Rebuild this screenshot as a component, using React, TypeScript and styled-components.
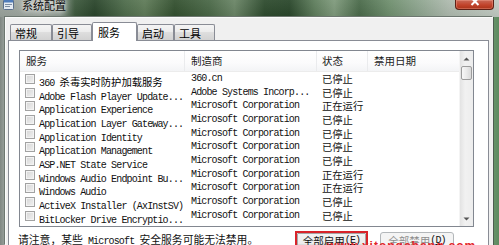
import React from "react";
import styled, { createGlobalStyle } from "styled-components";

const CJK = `"Noto Sans CJK SC", "Noto Sans", sans-serif`;
const MONO = `"Liberation Mono", "Noto Sans CJK SC", monospace`;

const GlobalStyle = createGlobalStyle`
  html, body { margin: 0; padding: 0; }
  body {
    width: 499px; height: 245px; overflow: hidden;
    background: #8e9690;
    font-family: ${CJK};
  }
`;

const Screen = styled.div`
  position: relative;
  width: 499px;
  height: 245px;
  overflow: hidden;
  display: flex;
  flex-direction: column;
  background: linear-gradient(90deg, #7f8782 0%, #9aa29d 1%, #808c84 50%, #6e9a70 98%, #5e8a60 100%);
`;

const TitleBar = styled.div`
  height: 17px;
  flex: none;
  display: flex;
  align-items: flex-start;
  background:
    linear-gradient(180deg, rgba(255,255,255,0.06), rgba(0,0,0,0.06)),
    linear-gradient(90deg, #9aa39c 0%, #a3aba4 8%, #8f9b91 12%, #3e5a3e 15%, #2a452b 19%, #4e6c4b 25%, #5f7b58 29%, #33502f 35%, #4a6847 42%, #6a8566 47%, #2e4b2e 53%, #2a472b 58%, #5e7d5c 63%, #7f9a7c 67%, #4a6a4a 72%, #6f8f6e 78%, #8ea58f 84%, #aebaae 90%, #c2cbc3 100%);
`;

const AppIcon = styled.svg`
  margin: -1px 0 0 3px;
  flex: none;
`;

const TitleText = styled.div`
  margin: -1px 0 0 8px;
  font-size: 11px;
  line-height: 12px;
  color: #0a0a0a;
  text-shadow: 0 0 4px rgba(255,255,255,0.95), 0 0 7px rgba(255,255,255,0.8);
`;

const CloseButton = styled.div`
  margin: 0 5px 0 auto;
  width: 39px;
  height: 10px;
  box-sizing: border-box;
  border: 1px solid #5e2016;
  border-top: none;
  border-radius: 0 0 4px 4px;
  background: linear-gradient(180deg, #c96a58 0%, #c2432b 55%, #a83218 100%);
  box-shadow: inset 0 0 0 1px rgba(255,180,160,0.35);
  display: flex;
  justify-content: center;
  align-items: flex-start;
`;

const WindowBody = styled.div`
  flex: 1;
  min-height: 0;
  margin: 0 6px 0 5px;
  background: #f0f0f0;
  border-top: 1px solid #fbfcfb;
  border-left: 1px solid #fbfcfb;
  box-shadow: -1px -1px 0 #6d7770, 1px 0 0 #4d5d50;
  padding-top: 4px;
  display: flex;
  flex-direction: column;
`;

const TabStrip = styled.div`
  height: 19px;
  flex: none;
  display: flex;
  align-items: flex-end;
  padding-left: 4px;
  position: relative;
  z-index: 2;
`;

const Tab = styled.div<{ $active?: boolean; $w: number }>`
  box-sizing: border-box;
  width: ${(p) => p.$w}px;
  height: ${(p) => (p.$active ? 19 : 16)}px;
  margin-bottom: ${(p) => (p.$active ? 0 : 1)}px;
  padding-left: ${(p) => (p.$active ? 5 : 4)}px;
  border: 1px solid #898c95;
  border-bottom: none;
  border-radius: 2px 2px 0 0;
  background: ${(p) =>
    p.$active
      ? "#ffffff"
      : "linear-gradient(180deg, #f4f4f4 0%, #ececec 45%, #dedede 50%, #d2d2d2 100%)"};
  display: flex;
  align-items: center;
  font-size: 11px;
  line-height: 12px;
  color: #000;
`;

const TabPanel = styled.div`
  flex: 1;
  min-height: 0;
  position: relative;
  z-index: 1;
  margin: -1px 4px 0 2px;
  background: #ffffff;
  border: 1px solid #898c95;
  border-bottom: none;
  padding: 9px 14px 0 10px;
  display: flex;
  flex-direction: column;
`;

const ListBox = styled.div`
  height: 177px;
  flex: none;
  box-sizing: border-box;
  border: 1px solid #828790;
  display: flex;
  background: #fff;
`;

const ListContent = styled.div`
  flex: 1;
  min-width: 0;
  display: flex;
  flex-direction: column;
`;

const COLS = "165px 132px 51px 1fr";

const HeaderRow = styled.div`
  display: grid;
  grid-template-columns: ${COLS};
  height: 21px;
  flex: none;
  background: linear-gradient(180deg, #ffffff 0%, #fbfbfc 60%, #f3f4f6 100%);
  border-bottom: 1px solid #ececec;
  box-sizing: border-box;
`;

const HeaderCell = styled.div<{ $pad: number }>`
  display: flex;
  align-items: center;
  padding-left: ${(p) => p.$pad}px;
  border-right: 1px solid #eaebed;
  font-size: 10.5px;
  line-height: 12px;
  color: #1a1a1a;
  &:last-child { border-right: none; }
`;

const Row = styled.div`
  display: grid;
  grid-template-columns: ${COLS};
  height: 13.7px;
  align-items: center;
`;

const NameCell = styled.div`
  display: flex;
  align-items: center;
  gap: 4px;
  padding-left: 5px;
  white-space: nowrap;
  overflow: hidden;
`;

const MonoText = styled.span`
  font-family: ${MONO};
  font-size: 10px;
  letter-spacing: -0.85px;
  line-height: 12px;
  color: #111;
  white-space: pre;
`;

const CjkText = styled.span<{ $size?: number }>`
  font-family: ${CJK};
  font-size: ${(p) => p.$size ?? 10.3}px;
  letter-spacing: 0;
  line-height: 12px;
`;

const VendorCell = styled.div`
  padding-left: 6px;
  white-space: nowrap;
  overflow: hidden;
  display: flex;
  align-items: center;
`;

const StatusCell = styled.div`
  padding-left: 5px;
  font-size: 10.3px;
  line-height: 12px;
  color: #111;
  white-space: nowrap;
`;

const CheckBox = styled.span`
  width: 10px;
  height: 10px;
  box-sizing: border-box;
  flex: none;
  border: 1px solid #a2a2a2;
  background: linear-gradient(135deg, #d6d6d6 0%, #e6e6e6 60%, #f1f1f1 100%);
  box-shadow: inset 0 0 0 1px #f3f3f3;
`;

const ScrollBar = styled.div`
  width: 14px;
  flex: none;
  display: flex;
  flex-direction: column;
  background: linear-gradient(90deg, #e3e3e3 0%, #f1f1f1 40%, #ededed 100%);
  border-left: 1px solid #f4f4f4;
  box-sizing: border-box;
`;

const ArrowButton = styled.div`
  height: 15px;
  flex: none;
  display: flex;
  align-items: center;
  justify-content: center;
`;

const Thumb = styled.div`
  height: 14px;
  flex: none;
  margin: 0 1px;
  box-sizing: border-box;
  border: 1px solid #9c9c9c;
  border-radius: 2px;
  background: linear-gradient(90deg, #f7f7f7 0%, #eaeaea 50%, #d9d9d9 100%);
`;

const Track = styled.div`
  flex: 1;
`;

const Footer = styled.div`
  display: flex;
  align-items: flex-start;
  margin-top: 4px;
`;

const Note = styled.div`
  flex: 1;
  margin-left: -1px;
  padding-top: 2px;
  font-size: 10.8px;
  line-height: 12px;
  color: #111;
  white-space: nowrap;
`;

const ButtonGroup = styled.div`
  display: flex;
  align-items: flex-start;
  gap: 12px;
  margin-right: 20px;
`;

const Highlight = styled.div`
  border: 2px solid #d8242a;
  width: 73px;
  height: 24px;
  box-sizing: border-box;
  display: flex;
`;

const PushButton = styled.div<{ $disabled?: boolean }>`
  box-sizing: border-box;
  flex: ${(p) => (p.$disabled ? "none" : "1")};
  width: ${(p) => (p.$disabled ? "74px" : "auto")};
  height: 22px;
  margin-top: ${(p) => (p.$disabled ? 1 : 0)}px;
  border: 1px solid ${(p) => (p.$disabled ? "#b3b7ba" : "#a6a6a6")};
  border-radius: ${(p) => (p.$disabled ? 3 : 1)}px;
  background: ${(p) =>
    p.$disabled ? "#f4f4f4" : "linear-gradient(180deg, #f3f3f3 0%, #ebebeb 50%, #dddddd 51%, #d4d4d4 100%)"};
  color: ${(p) => (p.$disabled ? "#8d8d8d" : "#111")};
  display: flex;
  justify-content: center;
  align-items: flex-start;
  padding-top: ${(p) => (p.$disabled ? 2 : 1)}px;
  font-size: 10.5px;
  line-height: 12px;
  white-space: nowrap;
`;

const Watermark = styled.div`
  position: absolute;
  left: 327px;
  top: 240px;
  font-family: "Liberation Sans", "Noto Sans CJK SC", sans-serif;
  font-weight: bold;
  font-size: 12px;
  line-height: 12px;
  color: #e3262b;
  letter-spacing: 1px;
  z-index: 5;
  white-space: nowrap;
`;

type Service = { name: React.ReactNode; vendor: string; status: string };

const MS = "Microsoft Corporation";

const services: Service[] = [
  {
    name: (
      <>
        <MonoText>360 </MonoText>
        <CjkText>杀毒实时防护加载服务</CjkText>
      </>
    ),
    vendor: "360.cn",
    status: "已停止",
  },
  { name: <MonoText>Adobe Flash Player Update...</MonoText>, vendor: "Adobe Systems Incorp...", status: "已停止" },
  { name: <MonoText>Application Experience</MonoText>, vendor: MS, status: "正在运行" },
  { name: <MonoText>Application Layer Gateway...</MonoText>, vendor: MS, status: "已停止" },
  { name: <MonoText>Application Identity</MonoText>, vendor: MS, status: "已停止" },
  { name: <MonoText>Application Management</MonoText>, vendor: MS, status: "已停止" },
  { name: <MonoText>ASP.NET State Service</MonoText>, vendor: MS, status: "已停止" },
  { name: <MonoText>Windows Audio Endpoint Bu...</MonoText>, vendor: MS, status: "正在运行" },
  { name: <MonoText>Windows Audio</MonoText>, vendor: MS, status: "正在运行" },
  { name: <MonoText>ActiveX Installer (AxInstSV)</MonoText>, vendor: MS, status: "已停止" },
  { name: <MonoText>BitLocker Drive Encryptio...</MonoText>, vendor: MS, status: "已停止" },
];

const tabs = [
  { label: "常规", w: 42 },
  { label: "引导", w: 40 },
  { label: "服务", w: 45, active: true },
  { label: "启动", w: 37 },
  { label: "工具", w: 41 },
];

const ArrowUp = () => (
  <svg width="7" height="4" viewBox="0 0 7 4">
    <path d="M0.5 3.5 L3.5 0.5 L6.5 3.5 Z" fill="#555" />
  </svg>
);

const ArrowDown = () => (
  <svg width="7" height="4" viewBox="0 0 7 4">
    <path d="M0.5 0.5 L3.5 3.5 L6.5 0.5 Z" fill="#555" />
  </svg>
);

export default function App() {
  return (
    <>
      <GlobalStyle />
      <Screen>
        <TitleBar>
          <AppIcon width="11" height="11" viewBox="0 0 11 11">
            <rect x="0.5" y="0.5" width="10" height="10" rx="1" fill="#e3eaf2" stroke="#5a6f8c" />
            <rect x="1" y="1" width="9" height="2.5" fill="#4e7cba" />
            <rect x="2" y="5" width="7" height="1" fill="#7b8ca2" />
            <rect x="2" y="7" width="5" height="1" fill="#7b8ca2" />
          </AppIcon>
          <TitleText>系统配置</TitleText>
          <CloseButton>
            <svg width="10" height="6" viewBox="0 0 10 6">
              <path d="M1.5 -2 L8.5 5 M8.5 -2 L1.5 5" stroke="#ffffff" strokeWidth="2" />
            </svg>
          </CloseButton>
        </TitleBar>
        <WindowBody>
          <TabStrip>
            {tabs.map((t) => (
              <Tab key={t.label} $w={t.w} $active={t.active}>
                {t.label}
              </Tab>
            ))}
          </TabStrip>
          <TabPanel>
            <ListBox>
              <ListContent>
                <HeaderRow>
                  <HeaderCell $pad={6}>服务</HeaderCell>
                  <HeaderCell $pad={6}>制造商</HeaderCell>
                  <HeaderCell $pad={5}>状态</HeaderCell>
                  <HeaderCell $pad={6}>禁用日期</HeaderCell>
                </HeaderRow>
                {services.map((s, i) => (
                  <Row key={i}>
                    <NameCell>
                      <CheckBox />
                      <span>{s.name}</span>
                    </NameCell>
                    <VendorCell>
                      <MonoText>{s.vendor}</MonoText>
                    </VendorCell>
                    <StatusCell>{s.status}</StatusCell>
                    <div />
                  </Row>
                ))}
              </ListContent>
              <ScrollBar>
                <ArrowButton>
                  <ArrowUp />
                </ArrowButton>
                <Thumb />
                <Track />
                <ArrowButton>
                  <ArrowDown />
                </ArrowButton>
              </ScrollBar>
            </ListBox>
            <Footer>
              <Note>
                请注意，某些<MonoText> Microsoft </MonoText>安全服务可能无法禁用。
              </Note>
              <ButtonGroup>
                <Highlight>
                  <PushButton>
                    全部启用<MonoText>(<u>E</u>)</MonoText>
                  </PushButton>
                </Highlight>
                <PushButton $disabled>
                  全部禁用<MonoText>(<u>D</u>)</MonoText>
                </PushButton>
              </ButtonGroup>
            </Footer>
          </TabPanel>
        </WindowBody>
        <Watermark>www.xitongcheng.com</Watermark>
      </Screen>
    </>
  );
}
